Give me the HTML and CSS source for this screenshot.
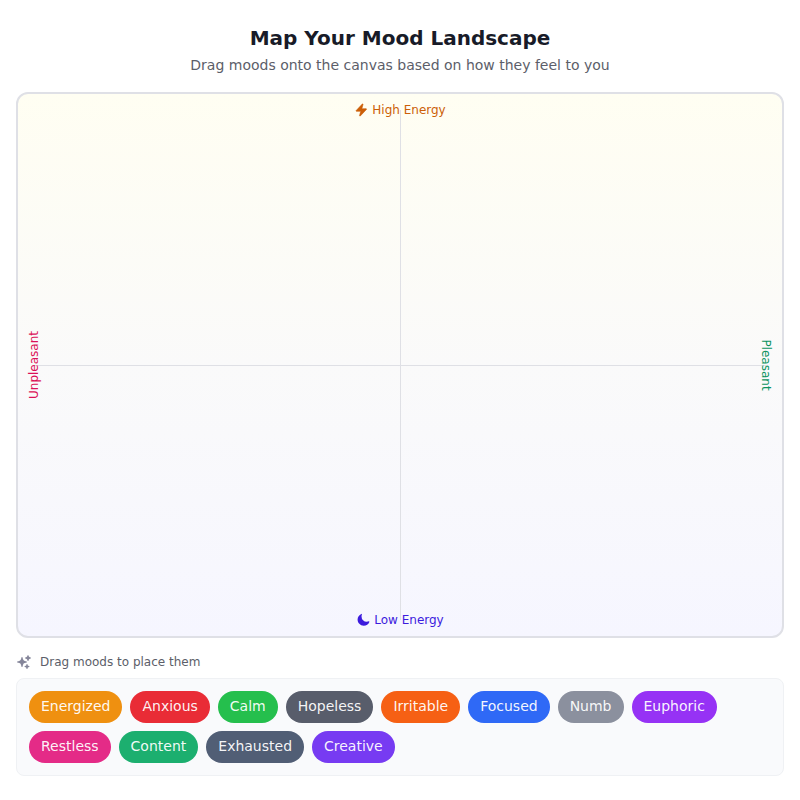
FILE: index.html
```html
<!DOCTYPE html>
<html lang="en">
  <head>
    <meta charset="utf-8">
    <title>Map Your Mood Landscape</title>
    <link rel="stylesheet" href="styles.css">
  </head>
  <body>
    <div class="page">
      <header class="header">
        <h1>Map Your Mood Landscape</h1>
        <p>Drag moods onto the canvas based on how they feel to you</p>
      </header>

      <div class="canvas">
        <div class="line-v"></div>
        <div class="line-h"></div>
        <div class="axis top">
          <svg width="14" height="14" viewBox="0 0 24 24" fill="currentColor" stroke="currentColor" stroke-width="1"><path d="M14.6 1.6a.75.75 0 0 1 .35.85L12.98 9.75h7.27a.75.75 0 0 1 .55 1.26l-10.5 11.25a.75.75 0 0 1-1.27-.71l1.97-7.3H3.75a.75.75 0 0 1-.55-1.26L13.7 1.74a.75.75 0 0 1 .9-.14z"/></svg>
          <span>High Energy</span>
        </div>
        <div class="axis bottom">
          <svg width="14" height="14" viewBox="0 0 24 24" fill="currentColor"><path d="M9.53 1.72a.75.75 0 0 1 .16.82A9 9 0 0 0 9 6a9 9 0 0 0 9 9 9 9 0 0 0 3.46-.69.75.75 0 0 1 .98.98A10.5 10.5 0 0 1 12.75 21.75C6.95 21.75 2.25 17.05 2.25 11.25c0-4.37 2.67-8.11 6.46-9.69a.75.75 0 0 1 .82.16z"/></svg>
          <span>Low Energy</span>
        </div>
        <div class="axis left">Unpleasant</div>
        <div class="axis right">Pleasant</div>
      </div>

      <div class="hint">
        <svg width="16" height="16" viewBox="0 0 24 24" fill="currentColor"><path d="M9 4.5a.75.75 0 0 1 .72.54l.81 2.85a3.75 3.75 0 0 0 2.58 2.58l2.85.81a.75.75 0 0 1 0 1.44l-2.85.81a3.75 3.75 0 0 0-2.58 2.58l-.81 2.85a.75.75 0 0 1-1.44 0l-.81-2.85a3.75 3.75 0 0 0-2.58-2.58l-2.85-.81a.75.75 0 0 1 0-1.44l2.85-.81a3.75 3.75 0 0 0 2.58-2.58l.81-2.85A.75.75 0 0 1 9 4.5zM18 1.5a.75.75 0 0 1 .73.57l.26 1.03c.24.95.97 1.68 1.92 1.92l1.03.26a.75.75 0 0 1 0 1.46l-1.03.26a2.6 2.6 0 0 0-1.92 1.92l-.26 1.03a.75.75 0 0 1-1.46 0l-.26-1.03a2.6 2.6 0 0 0-1.92-1.92l-1.03-.26a.75.75 0 0 1 0-1.46l1.03-.26a2.6 2.6 0 0 0 1.92-1.92l.26-1.03A.75.75 0 0 1 18 1.5zM16.5 15a.75.75 0 0 1 .71.51l.4 1.19c.15.44.5.79.94.94l1.19.4a.75.75 0 0 1 0 1.42l-1.19.4c-.44.15-.79.5-.94.94l-.4 1.19a.75.75 0 0 1-1.42 0l-.4-1.19a1.5 1.5 0 0 0-.94-.94l-1.19-.4a.75.75 0 0 1 0-1.42l1.19-.4c.44-.15.79-.5.94-.94l.4-1.19A.75.75 0 0 1 16.5 15z"/></svg>
        <span>Drag moods to place them</span>
      </div>

      <div class="tray">
        <div class="mood energized">Energized</div>
        <div class="mood anxious">Anxious</div>
        <div class="mood calm">Calm</div>
        <div class="mood hopeless">Hopeless</div>
        <div class="mood irritable">Irritable</div>
        <div class="mood focused">Focused</div>
        <div class="mood numb">Numb</div>
        <div class="mood euphoric">Euphoric</div>
        <div class="mood restless">Restless</div>
        <div class="mood content">Content</div>
        <div class="mood exhausted">Exhausted</div>
        <div class="mood creative">Creative</div>
      </div>
    </div>
  </body>
</html>
```

FILE: styles.css
```css
* {
  box-sizing: border-box;
}

body {
  margin: 0;
  background: #fff;
  font-family: "DejaVu Sans", sans-serif;
}

.page {
  height: 800px;
  padding: 24px 16px;
  display: flex;
  flex-direction: column;
}

.header {
  text-align: center;
  margin-bottom: 17px;
}

.header h1 {
  margin: 0 0 3px;
  font-size: 20px;
  line-height: 28px;
  font-weight: bold;
  color: #181b28;
}

.header p {
  margin: 0;
  font-size: 14px;
  line-height: 20px;
  color: #5c5e69;
}

.canvas {
  position: relative;
  flex: 1;
  border: 2px solid #dfe0e6;
  border-radius: 12px;
  background: linear-gradient(to bottom, #fffef2, #fafafa 50%, #f6f6ff);
}

/* axes crossing in the middle of the canvas */
.line-v,
.line-h {
  position: absolute;
  background: #dfe0e5;
}

.line-v {
  left: 50%;
  top: 16px;
  bottom: 16px;
  width: 1px;
}

.line-h {
  top: 50%;
  left: 16px;
  right: 16px;
  height: 1px;
}

.axis {
  position: absolute;
  display: flex;
  align-items: center;
  gap: 4px;
  font-size: 12px;
  line-height: 16px;
  white-space: nowrap;
}

.top {
  top: 8px;
  left: 50%;
  transform: translateX(-50%);
  color: #cc5f08;
}

.bottom {
  bottom: 8px;
  left: 50%;
  transform: translateX(-50%);
  color: #3c1bdd;
}

.left {
  left: 8px;
  top: 50%;
  writing-mode: vertical-rl;
  transform: translateY(-50%) rotate(180deg);
  color: #db1158;
}

.right {
  right: 8px;
  top: 50%;
  writing-mode: vertical-rl;
  transform: translateY(-50%);
  color: #0b935e;
}

.hint {
  display: flex;
  align-items: center;
  gap: 8px;
  margin: 16px 0 8px;
  font-size: 12px;
  line-height: 16px;
  color: #5c5e69;
}

.hint svg {
  color: #85869a;
}

.tray {
  display: flex;
  flex-wrap: wrap;
  gap: 8px;
  padding: 12px;
  border: 1px solid #eff1f4;
  border-radius: 8px;
  background: #f9fafc;
}

.mood {
  padding: 5px 12px 7px;
  border-radius: 16px;
  font-size: 14px;
  line-height: 20px;
  color: rgba(255, 255, 255, 0.95);
}

.energized { background: #ef9010; }
.anxious { background: #e92c36; }
.calm { background: #25bf4d; }
.hopeless { background: #585d6b; }
.irritable { background: #f66014; }
.focused { background: #2f69f6; }
.numb { background: #8b909e; }
.euphoric { background: #9632f5; }
.restless { background: #e42b87; }
.content { background: #1caf6f; }
.exhausted { background: #515e75; }
.creative { background: #773bf2; }
```
